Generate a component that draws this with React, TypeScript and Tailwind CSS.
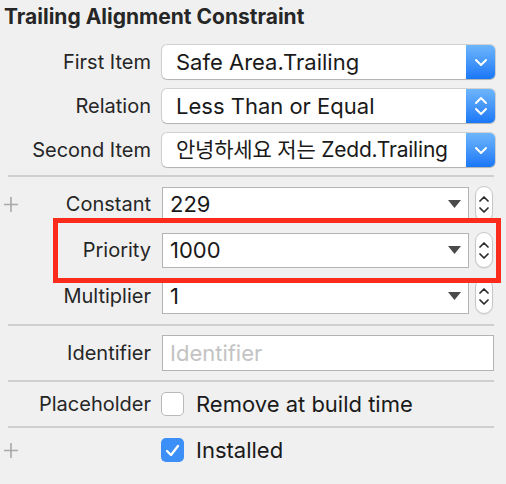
import React from 'react'

const font = { fontFamily: 'Inter, "Noto Sans CJK KR", sans-serif' }

const ChevronDown = () => (
  <svg width="14" height="9" viewBox="0 0 14 9" fill="none">
    <path d="M2 2l5 5 5-5" stroke="white" strokeWidth="2" strokeLinecap="round" strokeLinejoin="round" />
  </svg>
)

const ChevronUpDown = () => (
  <svg width="14" height="22" viewBox="0 0 14 22" fill="none">
    <path d="M2 8l5-5 5 5M2 14l5 5 5-5" stroke="white" strokeWidth="2" strokeLinecap="round" strokeLinejoin="round" />
  </svg>
)

const Plus = () => (
  <svg width="14" height="15" viewBox="0 0 14 15" className="ml-[4px]">
    <path d="M0 7.5h14M7 0v15" stroke="#a9a9a9" strokeWidth="1.6" />
  </svg>
)

interface RowProps {
  label?: string
  plus?: boolean
  children: React.ReactNode
  className?: string
}

const Row: React.FC<RowProps> = ({ label, plus, children, className }) => (
  <div className={`flex items-center ${className ?? ''}`}>
    <div className="w-[151px] flex items-center justify-between">
      <div>{plus && <Plus />}</div>
      <span className="text-[20px] text-[#262626] whitespace-nowrap">{label}</span>
    </div>
    <div className="ml-[11px] flex items-center">{children}</div>
  </div>
)

const Popup: React.FC<{ value: string; updown?: boolean; small?: boolean }> = ({ value, updown, small }) => (
  <div className="w-[333px] h-[34px] flex rounded-[5px] bg-white shadow-[0_0_0_1px_rgba(0,0,0,0.13),0_1px_1px_rgba(0,0,0,0.15)] overflow-hidden">
    <div
      className={`flex-1 flex items-center pl-[14px] text-[#1a1a1a] whitespace-nowrap overflow-hidden ${
        small ? 'text-[21px] tracking-[-0.2px]' : 'text-[22px]'
      }`}
    >
      {value}
    </div>
    <div className="w-[29px] flex items-center justify-center bg-gradient-to-b from-[#6db5fb] to-[#1877f6]">
      {updown ? <ChevronUpDown /> : <ChevronDown />}
    </div>
  </div>
)

const Stepper = () => (
  <div className="ml-[6px] w-[18px] h-[36px] rounded-full border border-[#c8c8c8] bg-white flex flex-col items-center justify-center gap-[5px] shadow-[0_1px_1px_rgba(0,0,0,0.08)]">
    <svg width="10" height="7" viewBox="0 0 10 7" fill="none">
      <path d="M1 6l4-4 4 4" stroke="#2a2a2a" strokeWidth="1.7" strokeLinecap="round" strokeLinejoin="round" />
    </svg>
    <svg width="10" height="7" viewBox="0 0 10 7" fill="none">
      <path d="M1 1l4 4 4-4" stroke="#2a2a2a" strokeWidth="1.7" strokeLinecap="round" strokeLinejoin="round" />
    </svg>
  </div>
)

const ComboField: React.FC<{ value: string }> = ({ value }) => (
  <div className="flex items-center">
    <div className="w-[307px] h-[35px] border border-[#b4b4b4] bg-white flex items-center pl-[7px] pr-[7px]">
      <span className="flex-1 text-[22px] text-[#1a1a1a]">{value}</span>
      <svg width="13" height="8" viewBox="0 0 13 8">
        <path d="M0 0h13L6.5 8z" fill="#4a4a4a" />
      </svg>
    </div>
    <Stepper />
  </div>
)

const Divider: React.FC<{ className?: string }> = ({ className }) => (
  <div className={`ml-[8px] w-[486px] h-[2px] bg-[#cfcfcf] ${className ?? ''}`} />
)

const Checkbox: React.FC<{ checked?: boolean }> = ({ checked }) =>
  checked ? (
    <div className="-ml-[1px] w-[23px] h-[24px] rounded-[5px] bg-[#3b8ff7] flex items-center justify-center">
      <svg width="15" height="13" viewBox="0 0 15 13" fill="none">
        <path d="M2 7l4 4 7-9" stroke="white" strokeWidth="2.3" strokeLinecap="round" strokeLinejoin="round" />
      </svg>
    </div>
  ) : (
    <div className="-ml-[1px] w-[23px] h-[24px] rounded-[5px] bg-white border border-[#b9b9b9]" />
  )

export default function App() {
  return (
    <div className="relative w-[506px] h-[484px] bg-[#f0f0f0] overflow-hidden" style={font}>
      <div className="pt-[6px] pl-[4px] h-[28px] text-[21px] leading-[22px] font-bold text-[#262626] whitespace-nowrap">
        Trailing Alignment Constraint
      </div>

      <Row label="First Item" className="mt-[17px] h-[34px]">
        <Popup value="Safe Area.Trailing" />
      </Row>
      <Row label="Relation" className="mt-[10px] h-[34px]">
        <Popup value="Less Than or Equal" updown />
      </Row>
      <Row label="Second Item" className="mt-[10px] h-[34px]">
        <Popup value="안녕하세요 저는 Zedd.Trailing" small />
      </Row>

      <Divider className="mt-[8px]" />

      <Row label="Constant" plus className="mt-[9px] h-[36px]">
        <ComboField value="229" />
      </Row>
      <Row label="Priority" className="mt-[10px] h-[36px]">
        <ComboField value="1000" />
      </Row>
      <Row label="Multiplier" className="mt-[10px] h-[36px]">
        <ComboField value="1" />
      </Row>

      <Divider className="mt-[10px]" />

      <Row label="Identifier" className="mt-[9px] h-[36px]">
        <div className="w-[332px] h-[36px] border border-[#b4b4b4] bg-white flex items-center pl-[7px] text-[22px] text-[#c3c3c3]">
          Identifier
        </div>
      </Row>

      <Divider className="mt-[9px]" />

      <Row label="Placeholder" className="mt-[10px] h-[24px]">
        <Checkbox />
        <span className="ml-[12px] text-[22px] text-[#1a1a1a]">Remove at build time</span>
      </Row>

      <Divider className="mt-[10px]" />

      <Row plus className="mt-[10px] h-[24px]">
        <Checkbox checked />
        <span className="ml-[12px] text-[22px] text-[#1a1a1a]">Installed</span>
      </Row>

      <div className="absolute left-[53px] top-[218px] w-[448px] h-[65px] border-[5px] border-[#fc2b1c]" />
    </div>
  )
}
